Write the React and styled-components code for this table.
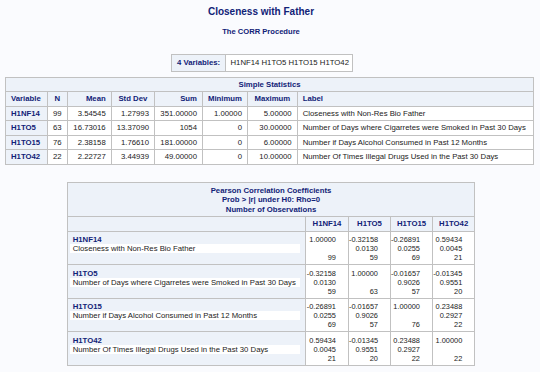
import React from 'react';
import styled, { createGlobalStyle } from 'styled-components';

const GlobalStyle = createGlobalStyle`
  html, body {
    margin: 0;
    padding: 0;
    background: #fafbfe;
  }
  body {
    font-family: "Liberation Sans", Arial, sans-serif;
    color: #000;
  }
`;

const Page = styled.div`
  width: 540px;
  height: 372px;
  overflow: hidden;
  display: flex;
  flex-direction: column;
  align-items: flex-start;
`;

const Title = styled.div`
  width: 522px;
  text-align: center;
  color: #112277;
  font-weight: bold;
  font-size: ${(p) => p.size}px;
  line-height: 12px;
  margin-top: ${(p) => p.top}px;
`;

const Table = styled.table`
  border-collapse: collapse;
  table-layout: fixed;
  width: ${(p) => p.width}px;
  margin-left: ${(p) => p.left}px;
  margin-top: ${(p) => p.top}px;
  border: 1px solid #c1c1c1;
  font-size: 7.75px;
  line-height: 9.5px;
`;

const Head = styled.th`
  background: #edf2f9;
  color: #112277;
  font-weight: bold;
  border: 1px solid #c1c1c1;
  padding: 2px 5px;
  text-align: ${(p) => p.align || 'center'};
  white-space: nowrap;
  overflow: hidden;
`;

const Cell = styled.td`
  background: #fff;
  color: #222;
  border: 1px solid #c1c1c1;
  padding: 2px 5px;
  text-align: ${(p) => p.align || 'right'};
  white-space: nowrap;
  overflow: hidden;
`;

const CorrTitle = styled.th`
  background: #edf2f9;
  color: #112277;
  font-weight: bold;
  border: 1px solid #c1c1c1;
  padding: 2.5px 5px 2px;
  text-align: center;
  line-height: 9.5px;
`;

const RowHead = styled.th`
  background: #edf2f9;
  color: #112277;
  font-weight: bold;
  border: 1px solid #c1c1c1;
  padding: 3.5px 5px 2px 2px;
  text-align: left;
  vertical-align: top;
  line-height: 9px;
  height: 27px;
`;

const RowName = styled.div`
  padding-left: 3px;
`;

const RowLabel = styled.div`
  background: #fff;
  color: #222;
  font-weight: normal;
  padding-left: 3px;
  white-space: nowrap;
`;

const NumCell = styled.td`
  background: #fff;
  color: #222;
  border: 1px solid #c1c1c1;
  padding: 3.5px 12px 2px 0;
  text-align: right;
  vertical-align: top;
  font-size: 7.4px;
  line-height: 9px;
  white-space: nowrap;
`;

const Line = styled.div`
  height: 9px;
`;

const stats = [
  ['H1NF14', '99', '3.54545', '1.27993', '351.00000', '1.00000', '5.00000', 'Closeness with Non-Res Bio Father'],
  ['H1TO5', '63', '16.73016', '13.37090', '1054', '0', '30.00000', 'Number of Days where Cigarretes were Smoked in Past 30 Days'],
  ['H1TO15', '76', '2.38158', '1.76610', '181.00000', '0', '6.00000', 'Number if Days Alcohol Consumed in Past 12 Months'],
  ['H1TO42', '22', '2.22727', '3.44939', '49.00000', '0', '10.00000', 'Number Of Times Illegal Drugs Used in the Past 30 Days'],
];

const statCols = [41.7, 20, 44, 43.3, 48, 45, 49.7, 236.3];
const statHeads = [
  ['Variable', 'left'],
  ['N', 'center'],
  ['Mean', 'right'],
  ['Std Dev', 'center'],
  ['Sum', 'right'],
  ['Minimum', 'center'],
  ['Maximum', 'center'],
  ['Label', 'left'],
];

const corr = [
  ['H1NF14', 'Closeness with Non-Res Bio Father', [
    ['1.00000', '', '99'], ['-0.32158', '0.0130', '59'], ['-0.26891', '0.0255', '69'], ['0.59434', '0.0045', '21'],
  ]],
  ['H1TO5', 'Number of Days where Cigarretes were Smoked in Past 30 Days', [
    ['-0.32158', '0.0130', '59'], ['1.00000', '', '63'], ['-0.01657', '0.9026', '57'], ['-0.01345', '0.9551', '20'],
  ]],
  ['H1TO15', 'Number if Days Alcohol Consumed in Past 12 Months', [
    ['-0.26891', '0.0255', '69'], ['-0.01657', '0.9026', '57'], ['1.00000', '', '76'], ['0.23488', '0.2927', '22'],
  ]],
  ['H1TO42', 'Number Of Times Illegal Drugs Used in the Past 30 Days', [
    ['0.59434', '0.0045', '21'], ['-0.01345', '0.9551', '20'], ['0.23488', '0.2927', '22'], ['1.00000', '', '22'],
  ]],
];

const corrCols = [238.3, 43, 42, 42, 42.3];
const vars = ['H1NF14', 'H1TO5', 'H1TO15', 'H1TO42'];

export default function App() {
  return (
    <Page>
      <GlobalStyle />
      <Title size={10} top={6}>Closeness with Father</Title>
      <Title size={7.6} top={7.5}>The CORR Procedure</Title>

      <Table width={181} left={171} top={16.5}>
        <colgroup>
          <col style={{ width: 53.5 }} />
          <col style={{ width: 127.5 }} />
        </colgroup>
        <tbody>
          <tr>
            <Head align="left" style={{ padding: '3px 5px' }}>4 Variables:</Head>
            <Cell align="left" style={{ padding: '3px 5px' }}>{vars.join(' ')}</Cell>
          </tr>
        </tbody>
      </Table>

      <Table width={528} left={5} top={5}>
        <colgroup>
          {statCols.map((w, i) => <col key={i} style={{ width: w }} />)}
        </colgroup>
        <thead>
          <tr>
            <Head colSpan={8}>Simple Statistics</Head>
          </tr>
          <tr>
            {statHeads.map(([h, a]) => <Head key={h} align={a}>{h}</Head>)}
          </tr>
        </thead>
        <tbody>
          {stats.map((r) => (
            <tr key={r[0]}>
              <Head align="left">{r[0]}</Head>
              {r.slice(1, 7).map((v, i) => <Cell key={i}>{v}</Cell>)}
              <Cell align="left">{r[7]}</Cell>
            </tr>
          ))}
        </tbody>
      </Table>

      <Table width={407.6} left={66.7} top={17.5}>
        <colgroup>
          {corrCols.map((w, i) => <col key={i} style={{ width: w }} />)}
        </colgroup>
        <thead>
          <tr>
            <CorrTitle colSpan={5}>
              Pearson Correlation Coefficients<br />
              Prob &gt; |r| under H0: Rho=0<br />
              Number of Observations
            </CorrTitle>
          </tr>
          <tr>
            <Head />
            {vars.map((v) => <Head key={v}>{v}</Head>)}
          </tr>
        </thead>
        <tbody>
          {corr.map(([name, label, cells]) => (
            <tr key={name}>
              <RowHead>
                <RowName>{name}</RowName>
                <RowLabel>{label}</RowLabel>
              </RowHead>
              {cells.map((c, i) => (
                <NumCell key={i}>
                  {c.map((v, j) => <Line key={j}>{v}</Line>)}
                </NumCell>
              ))}
            </tr>
          ))}
        </tbody>
      </Table>
    </Page>
  );
}
